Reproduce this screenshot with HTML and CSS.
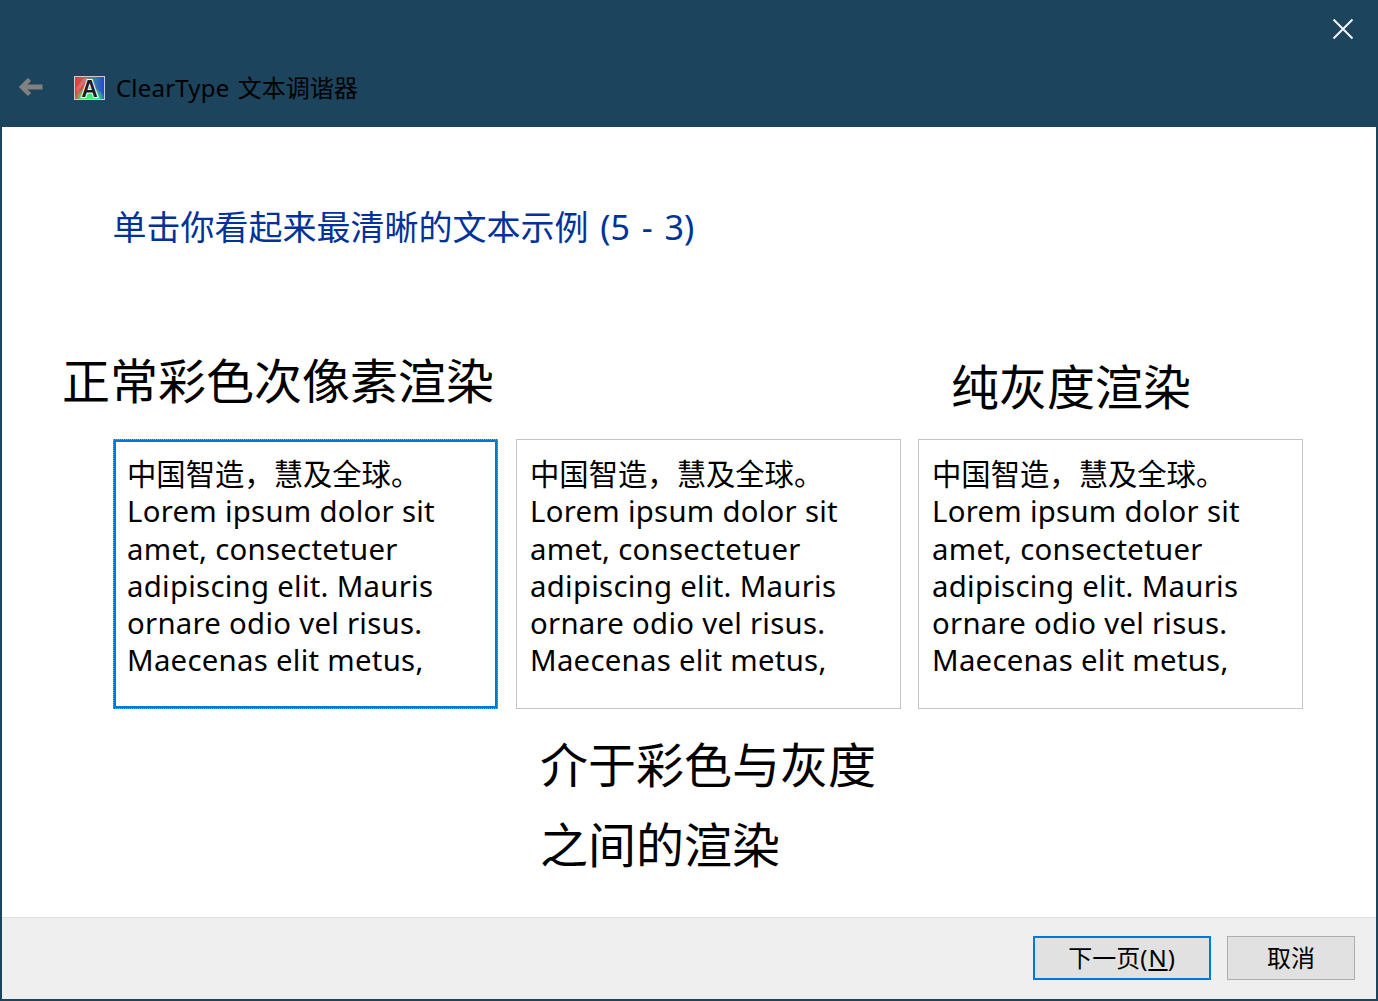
FILE: index.html
```html
<!DOCTYPE html>
<html lang="zh-CN">
<head>
<meta charset="utf-8">
<title>ClearType 文本调谐器</title>
<link rel="stylesheet" href="styles.css">
</head>
<body>
<div class="window">
  <header class="titlebar">
    <div class="close-row">
      <svg class="close-icon" width="22" height="22" viewBox="0 0 22 22"><path d="M1.500 1.500 20.500 20.500M20.500 1.500 1.500 20.500" fill="none" stroke="#f2f5f7" stroke-width="2"/></svg>
    </div>
    <div class="nav-row">
      <svg class="back-icon" width="26" height="20" viewBox="0 0 26 20"><path d="M11.500 1.500 4 9 11.500 16.500" fill="none" stroke="#808080" stroke-width="4.500"/><path d="M4 9H24.500" fill="none" stroke="#808080" stroke-width="5"/></svg>
      <svg class="app-icon" width="31" height="24" viewBox="0 0 31 24">
        <defs>
          <linearGradient id="rb" x1="0" x2="1" y1="0" y2="0"><stop offset="0" stop-color="#e8393c"/><stop offset=".3" stop-color="#c4564e"/><stop offset=".6" stop-color="#3f8f8a"/><stop offset="1" stop-color="#2440e8"/></linearGradient>
          <radialGradient id="gr" cx=".5" cy="1" r=".55"><stop offset="0" stop-color="#3dfb6d"/><stop offset=".6" stop-color="#3dfb6d" stop-opacity=".7"/><stop offset="1" stop-color="#3dfb6d" stop-opacity="0"/></radialGradient>
        </defs>
        <rect x=".5" y=".5" width="30" height="23" fill="url(#rb)" stroke="#c9cdd1"/>
        <rect x="1" y="1" width="29" height="22" fill="url(#gr)"/>
        <path d="M2 12 10 2H14L3 17Z" fill="#fff" fill-opacity=".18"/>
        <text class="app-letter" x="15.500" y="20.500">A</text>
      </svg>
      <span class="app-title"><span class="title-latin">ClearType</span> 文本调谐器</span>
    </div>
  </header>
  <main class="content">
    <h1 class="heading">单击你看起来最清晰的文本示例 (5 - 3)</h1>
    <div class="labels">
      <div class="label label-color">正常彩色次像素渲染</div>
      <div class="label label-gray">纯灰度渲染</div>
    </div>
    <div class="samples">
      <div class="sample selected">中国智造，慧及全球。<br><span class="latin">Lorem ipsum dolor sit<br>amet, consectetuer<br>adipiscing elit. Mauris<br>ornare odio vel risus.<br>Maecenas elit metus,</span></div>
      <div class="sample">中国智造，慧及全球。<br><span class="latin">Lorem ipsum dolor sit<br>amet, consectetuer<br>adipiscing elit. Mauris<br>ornare odio vel risus.<br>Maecenas elit metus,</span></div>
      <div class="sample">中国智造，慧及全球。<br><span class="latin">Lorem ipsum dolor sit<br>amet, consectetuer<br>adipiscing elit. Mauris<br>ornare odio vel risus.<br>Maecenas elit metus,</span></div>
    </div>
    <div class="label label-mid">介于彩色与灰度<br>之间的渲染</div>
  </main>
  <footer class="footer">
    <button class="btn btn-next" type="button">下一页<span class="btn-latin">(<u>N</u>)</span></button>
    <button class="btn btn-cancel" type="button">取消</button>
  </footer>
</div>
</body>
</html>
```
FILE: styles.css
```css
* { box-sizing: border-box; }
html, body { margin: 0; padding: 0; }
body {
  width: 1378px;
  height: 1001px;
  overflow: hidden;
  font-family: "Noto Sans", "Noto Sans CJK SC", sans-serif;
  color: #000;
}
.window {
  width: 1378px;
  height: 1001px;
  display: flex;
  flex-direction: column;
  background: #fff;
  border: 2px solid #1c445c;
  border-top: 0;
}
.titlebar {
  height: 127px;
  margin: 0 -2px;
  background: #1c445c;
  flex: none;
}
.close-row {
  height: 72px;
  display: flex;
  justify-content: flex-end;
  align-items: flex-start;
  padding: 18px 24px 0 0;
}
.nav-row {
  display: flex;
  align-items: center;
  height: 32px;
  padding-left: 18px;
}
.back-icon { flex: none; }
.app-icon { flex: none; margin-left: 30px; }
.app-letter {
  font-family: "Liberation Sans", sans-serif;
  font-size: 23px;
  font-weight: 700;
  text-anchor: middle;
  fill: #1c1c1c;
  stroke: #fff;
  stroke-width: 2px;
  paint-order: stroke;
}
.app-title {
  margin-left: 11px;
  font-size: 24px;
  line-height: 32px;
  white-space: nowrap;
  word-spacing: 2px;
}
.title-latin { letter-spacing: 0.2px; }
.content {
  flex: 1;
  min-height: 0;
}
.heading {
  margin: 0;
  padding: 77px 0 0 110.5px;
  font-size: 34px;
  line-height: 46px;
  font-weight: 400;
  color: #003399;
  white-space: nowrap;
  word-spacing: 3px;
}
.labels {
  display: flex;
  margin-top: 80px;
  height: 109px;
}
.label {
  font-size: 48px;
  line-height: 80px;
  white-space: nowrap;
}
.label-color { margin: 11px 0 0 60px; }
.label-gray { margin: 17px 0 0 457px; }
.samples {
  display: flex;
  padding-left: 111px;
  gap: 17px;
}
.sample {
  width: 385px;
  height: 270px;
  padding: 16px 13px 0;
  border: 1px solid #c4c4c4;
  font-size: 29.33px;
  line-height: 37.25px;
  white-space: nowrap;
}
.latin { letter-spacing: 0.28px; }
.sample.selected {
  margin-right: 1px;
  padding: 14px 11px 0;
  border: 3px solid #0078d7;
  outline: 1px dotted #e88a2c;
  outline-offset: -1px;
}
.label-mid {
  margin: 16px 0 0 538px;
}
.footer {
  flex: none;
  height: 82px;
  background: #efefef;
  border-top: 1px solid #dfdfdf;
  display: flex;
  justify-content: flex-end;
  align-items: flex-start;
  gap: 16px;
  padding: 18px 21px 0 0;
}
.btn {
  height: 44px;
  padding: 0;
  background: #e1e1e1;
  border: 1px solid #adadad;
  font-family: inherit;
  font-size: 24px;
  color: #000;
  line-height: 40px;
}
.btn-latin { letter-spacing: 1px; }
.btn-next { width: 178px; border: 2px solid #0078d7; }
.btn-cancel { width: 128px; }
```
